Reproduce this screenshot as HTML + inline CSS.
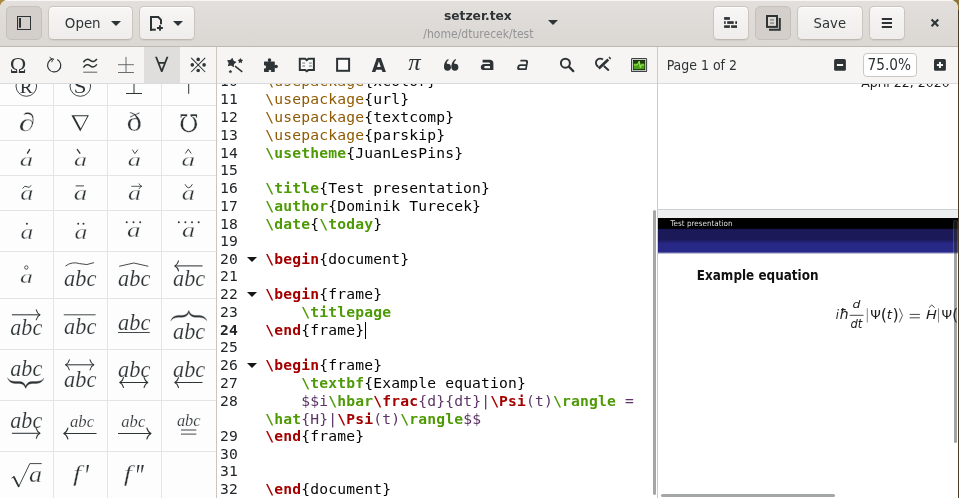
<!DOCTYPE html>
<html lang="en">
<head>
<meta charset="utf-8">
<title>setzer.tex</title>
<style>
*{box-sizing:border-box;margin:0;padding:0}
html,body{width:959px;height:498px;overflow:hidden;background:#4a3b2a}
body{position:relative;font-family:"DejaVu Sans","Liberation Sans",sans-serif;color:#2e3436}
#win{will-change:transform;position:absolute;left:0;top:0;width:958px;height:498px;background:#fff;border-radius:8px 8px 0 0;overflow:hidden}
#cornerL{position:absolute;left:0;top:0;width:10px;height:10px;background:#a88a3c}
#cornerR{position:absolute;left:949px;top:0;width:10px;height:10px;background:#8d7239}
#hdr{position:absolute;left:0;top:0;width:958px;height:47px;background:linear-gradient(#e2dfdc,#dbd7d3);border-bottom:1px solid #bfb8b1;box-shadow:inset 0 1px #f8f7f6}
.btn{position:absolute;top:6px;height:34px;border:1px solid #cbc5bf;border-bottom-color:#bfb8b1;border-radius:5px;background:linear-gradient(#f7f6f5,#efedec);box-shadow:inset 0 1px #fff,0 1px 1px rgba(0,0,0,.06)}
.btn.on{background:#d4cfca;border-color:#c6c0ba;box-shadow:none}
.tri{position:absolute;width:0;height:0;border-left:5px solid transparent;border-right:5px solid transparent;border-top:5px solid #2e3436}
#tb{position:absolute;left:0;top:47px;width:958px;height:37px;background:#f6f5f4;border-bottom:1px solid #d9dcde}
#tabsel{position:absolute;left:144px;top:47px;width:36px;height:36px;background:#dfdedd}
.vsep{position:absolute;top:47px;width:1px;height:451px}
#side{position:absolute;left:0;top:84px;width:216px;height:414px;background:#fdfdfd;overflow:hidden}
.gv{position:absolute;top:0;width:1px;height:414px;background:#e4e4e3}
.gh{position:absolute;left:0;width:216px;height:1px;background:#e4e4e3}
#ed{position:absolute;left:217px;top:84px;width:440px;height:414px;background:#fff;overflow:hidden}
.ln,.cl{position:absolute;font-family:"DejaVu Sans Mono","Liberation Mono",monospace;font-size:14.67px;line-height:18px;height:18px;letter-spacing:.168px;white-space:pre;color:#050505}
.ln{left:3px;color:#222527}
.ln.cur{font-weight:bold}
.cl{left:48.3px}
.k{color:#4e9a06;font-weight:bold}
.p{color:#8f5902}
.r{color:#a40000;font-weight:bold}
.m{color:#5c3566}
.fold{position:absolute;left:30px;width:0;height:0;border-left:5px solid transparent;border-right:5px solid transparent;border-top:5px solid #151515}
.caret{position:absolute;width:1px;height:17px;background:#000}
.sb{position:absolute;background:#a3a7a8;border-radius:2px}
#pv{position:absolute;left:658px;top:84px;width:300px;height:414px;background:#fff;overflow:hidden}
svg{position:absolute;overflow:visible}
</style>
</head>
<body>
<div id="cornerL"></div><div id="cornerR"></div>
<div id="win">
<div id="hdr">
  <div class="btn on" style="left:6px;width:36px"></div>
  <div class="btn" style="left:48px;width:85px"><div class="tri" style="left:62px;top:14px"></div></div>
  <div class="btn" style="left:139px;width:56px"><div class="tri" style="left:33px;top:14px"></div></div>
  <div class="tri" style="left:548px;top:20px"></div>
  <div class="btn" style="left:713px;width:36px"></div>
  <div class="btn on" style="left:755px;width:36px"></div>
  <div class="btn" style="left:797px;width:66px"></div>
  <div class="btn" style="left:869px;width:36px"></div>
</div>
<div id="tb"></div>
<div id="tabsel"></div>
<div id="side">
  <div class="gv" style="left:53px"></div><div class="gv" style="left:107px"></div><div class="gv" style="left:161px"></div>
  <div class="gh" style="top:21px"></div><div class="gh" style="top:56px"></div><div class="gh" style="top:91px"></div><div class="gh" style="top:126px"></div><div class="gh" style="top:167px"></div><div class="gh" style="top:214px"></div><div class="gh" style="top:265px"></div><div class="gh" style="top:316px"></div><div class="gh" style="top:367px"></div>
<svg style="left:0;top:-84px" width="216" height="498" viewBox="0 0 216 498" font-kerning="none">
<circle cx="26.3" cy="86.0" r="10.3" fill="none" stroke="#2e3436" stroke-width="0.9"/>
<text transform="translate(19.74 92.60) scale(1.037 1)" font-family="'Liberation Serif',serif" font-style="normal" font-weight="normal" font-size="18.63" fill="#2e3436">R</text>
<circle cx="80.3" cy="86.0" r="10.3" fill="none" stroke="#2e3436" stroke-width="0.9"/>
<text transform="translate(73.87 92.72) scale(1.213 1)" font-family="'Liberation Serif',serif" font-style="normal" font-weight="normal" font-size="18.90" fill="#2e3436">S</text>
<path d="M134.00 78.00L134.00 93.50" stroke="#2e3436" stroke-width="1.00" fill="none" stroke-linecap="butt"/>
<path d="M126.00 93.50L142.00 93.50" stroke="#2e3436" stroke-width="1.00" fill="none" stroke-linecap="butt"/>
<path d="M188.70 78.00L188.70 93.80" stroke="#2e3436" stroke-width="1.00" fill="none" stroke-linecap="butt"/>
<text transform="translate(18.70 131.16) scale(1.279 1)" font-family="'Liberation Serif',serif" font-style="italic" font-weight="normal" font-size="25.87" fill="#2e3436" stroke="#fdfdfd" stroke-width="0.3">∂</text>
<path d="M71.4 115.2H88.9L80.2 131.4ZM74.16 116.3L80.76 128.46L87.29 116.3Z" stroke="none" stroke-width="0.00" fill="#2e3436" stroke-linecap="round" stroke-linejoin="round"/>
<text transform="translate(126.51 131.15) scale(1.055 1)" font-family="'DejaVu Serif',serif" font-style="normal" font-weight="normal" font-size="24.55" fill="#2e3436" stroke="#fdfdfd" stroke-width="0.3">ð</text>
<text transform="translate(178.96 131.88) scale(0.973 1)" font-family="'DejaVu Serif',serif" font-style="normal" font-weight="normal" font-size="24.25" fill="#2e3436" stroke="#fdfdfd" stroke-width="0.3">℧</text>
<text transform="translate(19.65 165.75) scale(1.372 1)" font-family="'Liberation Serif',serif" font-style="italic" font-weight="normal" font-size="19.54" fill="#2e3436" stroke="#fdfdfd" stroke-width="0.3">a</text>
<path d="M27.20 153.60L29.90 149.20" stroke="#2e3436" stroke-width="1.30" fill="none" stroke-linecap="butt"/>
<text transform="translate(74.07 165.75) scale(1.336 1)" font-family="'Liberation Serif',serif" font-style="italic" font-weight="normal" font-size="19.54" fill="#2e3436" stroke="#fdfdfd" stroke-width="0.3">a</text>
<path d="M77.00 149.20L80.20 153.60" stroke="#2e3436" stroke-width="1.30" fill="none" stroke-linecap="butt"/>
<text transform="translate(127.86 165.75) scale(1.360 1)" font-family="'Liberation Serif',serif" font-style="italic" font-weight="normal" font-size="19.54" fill="#2e3436" stroke="#fdfdfd" stroke-width="0.3">a</text>
<path d="M132.6 150L134.9 153.6L137.6 150" stroke="#2e3436" stroke-width="0.90" fill="none" stroke-linecap="round" stroke-linejoin="round"/>
<text transform="translate(181.54 165.75) scale(1.396 1)" font-family="'Liberation Serif',serif" font-style="italic" font-weight="normal" font-size="19.54" fill="#2e3436" stroke="#fdfdfd" stroke-width="0.3">a</text>
<path d="M185.6 153.2L188.3 149.2L191 153.2" stroke="#2e3436" stroke-width="0.90" fill="none" stroke-linecap="round" stroke-linejoin="round"/>
<text transform="translate(20.27 200.34) scale(1.267 1)" font-family="'Liberation Serif',serif" font-style="italic" font-weight="normal" font-size="20.79" fill="#2e3436" stroke="#fdfdfd" stroke-width="0.3">a</text>
<path d="M22.8 188.2Q24.6 184.8 27 186.8T31 185.6" stroke="#2e3436" stroke-width="0.90" fill="none" stroke-linecap="round" stroke-linejoin="round"/>
<text transform="translate(73.64 200.34) scale(1.301 1)" font-family="'Liberation Serif',serif" font-style="italic" font-weight="normal" font-size="20.79" fill="#2e3436" stroke="#fdfdfd" stroke-width="0.3">a</text>
<path d="M75.60 185.90L84.00 185.90" stroke="#2e3436" stroke-width="0.90" fill="none" stroke-linecap="butt"/>
<text transform="translate(128.07 200.34) scale(1.256 1)" font-family="'Liberation Serif',serif" font-style="italic" font-weight="normal" font-size="20.79" fill="#2e3436" stroke="#fdfdfd" stroke-width="0.3">a</text>
<path d="M131.30 186.30L141.60 186.30" stroke="#2e3436" stroke-width="0.80" fill="none" stroke-linecap="butt"/>
<path d="M139 183.8Q139.8 185.6 141.8 186.3Q139.8 187 139 188.8" stroke="#2e3436" stroke-width="0.80" fill="none" stroke-linecap="round" stroke-linejoin="round"/>
<text transform="translate(181.77 200.34) scale(1.267 1)" font-family="'Liberation Serif',serif" font-style="italic" font-weight="normal" font-size="20.79" fill="#2e3436" stroke="#fdfdfd" stroke-width="0.3">a</text>
<path d="M185.2 184.6Q188.6 191.4 192.2 184.6" stroke="#2e3436" stroke-width="0.90" fill="none" stroke-linecap="round" stroke-linejoin="round"/>
<text transform="translate(20.59 239.15) scale(1.285 1)" font-family="'Liberation Serif',serif" font-style="italic" font-weight="normal" font-size="19.96" fill="#2e3436" stroke="#fdfdfd" stroke-width="0.3">a</text>
<circle cx="26.90" cy="223.80" r="1.00" fill="#2e3436"/>
<text transform="translate(74.48 239.15) scale(1.297 1)" font-family="'Liberation Serif',serif" font-style="italic" font-weight="normal" font-size="19.96" fill="#2e3436" stroke="#fdfdfd" stroke-width="0.3">a</text>
<circle cx="78.20" cy="223.80" r="1.00" fill="#2e3436"/>
<circle cx="83.50" cy="223.80" r="1.00" fill="#2e3436"/>
<text transform="translate(127.04 237.33) scale(1.288 1)" font-family="'Liberation Serif',serif" font-style="italic" font-weight="normal" font-size="21.00" fill="#2e3436" stroke="#fdfdfd" stroke-width="0.3">a</text>
<circle cx="126.70" cy="222.30" r="1.00" fill="#2e3436"/>
<circle cx="133.50" cy="222.30" r="1.00" fill="#2e3436"/>
<circle cx="140.20" cy="222.30" r="1.00" fill="#2e3436"/>
<text transform="translate(182.07 237.33) scale(1.244 1)" font-family="'Liberation Serif',serif" font-style="italic" font-weight="normal" font-size="21.00" fill="#2e3436" stroke="#fdfdfd" stroke-width="0.3">a</text>
<circle cx="178.80" cy="222.30" r="1.00" fill="#2e3436"/>
<circle cx="185.40" cy="222.30" r="1.00" fill="#2e3436"/>
<circle cx="192.00" cy="222.30" r="1.00" fill="#2e3436"/>
<circle cx="198.70" cy="222.30" r="1.00" fill="#2e3436"/>
<text transform="translate(20.08 282.95) scale(1.311 1)" font-family="'Liberation Serif',serif" font-style="italic" font-weight="normal" font-size="19.75" fill="#2e3436" stroke="#fdfdfd" stroke-width="0.3">a</text>
<circle cx="26.3" cy="267.5" r="1.7" fill="none" stroke="#2e3436" stroke-width="0.8"/>
<text transform="translate(64.03 286.26) scale(0.949 1)" font-family="'Liberation Serif',serif" font-style="italic" font-weight="normal" font-size="23.58" fill="#2e3436" stroke="#fdfdfd" stroke-width="0.15">abc</text>
<path d="M65.8 265.8Q72 261.2 79.5 263.6T93.6 262.8" stroke="#2e3436" stroke-width="0.90" fill="none" stroke-linecap="round" stroke-linejoin="round"/>
<text transform="translate(118.03 286.26) scale(0.949 1)" font-family="'Liberation Serif',serif" font-style="italic" font-weight="normal" font-size="23.58" fill="#2e3436" stroke="#fdfdfd" stroke-width="0.15">abc</text>
<path d="M119.6 266.2L133.8 263L147.9 266.2" stroke="#2e3436" stroke-width="0.90" fill="none" stroke-linecap="round" stroke-linejoin="round"/>
<text transform="translate(173.04 286.26) scale(0.966 1)" font-family="'Liberation Serif',serif" font-style="italic" font-weight="normal" font-size="23.01" fill="#2e3436" stroke="#fdfdfd" stroke-width="0.15">abc</text>
<path d="M174.80 265.90L202.50 265.90" stroke="#2e3436" stroke-width="1.05" fill="none" stroke-linecap="butt"/>
<path d="M178.55 260.90Q177.55 264.65 174.80 265.90Q177.55 267.15 178.55 270.90" stroke="#2e3436" stroke-width="1.05" fill="none" stroke-linecap="round" stroke-linejoin="round"/>
<text transform="translate(10.24 335.36) scale(0.934 1)" font-family="'Liberation Serif',serif" font-style="italic" font-weight="normal" font-size="23.72" fill="#2e3436" stroke="#fdfdfd" stroke-width="0.15">abc</text>
<path d="M11.90 314.80L40.00 314.80" stroke="#2e3436" stroke-width="1.05" fill="none" stroke-linecap="butt"/>
<path d="M36.25 309.80Q37.25 313.55 40.00 314.80Q37.25 316.05 36.25 319.80" stroke="#2e3436" stroke-width="1.05" fill="none" stroke-linecap="round" stroke-linejoin="round"/>
<text transform="translate(64.03 333.57) scale(0.991 1)" font-family="'Liberation Serif',serif" font-style="italic" font-weight="normal" font-size="22.58" fill="#2e3436" stroke="#fdfdfd" stroke-width="0.15">abc</text>
<path d="M63.80 314.80L95.60 314.80" stroke="#2e3436" stroke-width="0.90" fill="none" stroke-linecap="butt"/>
<text transform="translate(118.03 329.86) scale(0.973 1)" font-family="'Liberation Serif',serif" font-style="italic" font-weight="normal" font-size="23.01" fill="#2e3436" stroke="#fdfdfd" stroke-width="0.15">abc</text>
<path d="M118.00 332.50L149.80 332.50" stroke="#2e3436" stroke-width="0.90" fill="none" stroke-linecap="butt"/>
<text transform="translate(173.04 339.06) scale(0.955 1)" font-family="'Liberation Serif',serif" font-style="italic" font-weight="normal" font-size="23.29" fill="#2e3436" stroke="#fdfdfd" stroke-width="0.15">abc</text>
<path d="M170.8 320.6Q172.5 315.6 178 315.4H182.5Q187 315.2 188.8 310.4Q190.6 315.2 195 315.4H199.5Q205 315.6 206.8 320.6Q204.5 317.4 199.5 317.2H195Q190.2 317 188.8 312.6Q187.4 317 182.5 317.2H178Q173 317.4 170.8 320.6Z" stroke="#2e3436" stroke-width="0.30" fill="#2e3436" stroke-linecap="round" stroke-linejoin="round"/>
<text transform="translate(10.24 376.06) scale(0.940 1)" font-family="'Liberation Serif',serif" font-style="italic" font-weight="normal" font-size="23.58" fill="#2e3436" stroke="#fdfdfd" stroke-width="0.15">abc</text>
<path d="M7.6 378.2Q9.3 383.2 15 383.4H19.5Q24 383.6 25.7 388.4Q27.4 383.6 32 383.4H36.5Q42.2 383.2 43.9 378.2Q41.6 381.4 36.5 381.6H32Q27.2 381.8 25.7 386.2Q24.2 381.8 19.5 381.6H15Q10 381.4 7.6 378.2Z" stroke="#2e3436" stroke-width="0.30" fill="#2e3436" stroke-linecap="round" stroke-linejoin="round"/>
<text transform="translate(64.03 387.06) scale(0.961 1)" font-family="'Liberation Serif',serif" font-style="italic" font-weight="normal" font-size="23.29" fill="#2e3436" stroke="#fdfdfd" stroke-width="0.15">abc</text>
<path d="M65.60 364.80L93.80 364.80" stroke="#2e3436" stroke-width="1.05" fill="none" stroke-linecap="butt"/>
<path d="M69.35 359.80Q68.35 363.55 65.60 364.80Q68.35 366.05 69.35 369.80" stroke="#2e3436" stroke-width="1.05" fill="none" stroke-linecap="round" stroke-linejoin="round"/>
<path d="M90.05 359.80Q91.05 363.55 93.80 364.80Q91.05 366.05 90.05 369.80" stroke="#2e3436" stroke-width="1.05" fill="none" stroke-linecap="round" stroke-linejoin="round"/>
<text transform="translate(118.03 377.06) scale(0.961 1)" font-family="'Liberation Serif',serif" font-style="italic" font-weight="normal" font-size="23.29" fill="#2e3436" stroke="#fdfdfd" stroke-width="0.15">abc</text>
<path d="M119.80 382.50L147.80 382.50" stroke="#2e3436" stroke-width="1.05" fill="none" stroke-linecap="butt"/>
<path d="M123.55 377.50Q122.55 381.25 119.80 382.50Q122.55 383.75 123.55 387.50" stroke="#2e3436" stroke-width="1.05" fill="none" stroke-linecap="round" stroke-linejoin="round"/>
<path d="M144.05 377.50Q145.05 381.25 147.80 382.50Q145.05 383.75 144.05 387.50" stroke="#2e3436" stroke-width="1.05" fill="none" stroke-linecap="round" stroke-linejoin="round"/>
<text transform="translate(173.04 377.06) scale(0.955 1)" font-family="'Liberation Serif',serif" font-style="italic" font-weight="normal" font-size="23.29" fill="#2e3436" stroke="#fdfdfd" stroke-width="0.15">abc</text>
<path d="M174.80 382.50L202.50 382.50" stroke="#2e3436" stroke-width="1.05" fill="none" stroke-linecap="butt"/>
<path d="M178.55 377.50Q177.55 381.25 174.80 382.50Q177.55 383.75 178.55 387.50" stroke="#2e3436" stroke-width="1.05" fill="none" stroke-linecap="round" stroke-linejoin="round"/>
<text transform="translate(10.24 428.36) scale(0.951 1)" font-family="'Liberation Serif',serif" font-style="italic" font-weight="normal" font-size="23.29" fill="#2e3436" stroke="#fdfdfd" stroke-width="0.15">abc</text>
<path d="M11.90 433.30L40.00 433.30" stroke="#2e3436" stroke-width="1.05" fill="none" stroke-linecap="butt"/>
<path d="M36.25 428.30Q37.25 432.05 40.00 433.30Q37.25 434.55 36.25 438.30" stroke="#2e3436" stroke-width="1.05" fill="none" stroke-linecap="round" stroke-linejoin="round"/>
<text transform="translate(70.00 426.53) scale(1.030 1)" font-family="'Liberation Serif',serif" font-style="italic" font-weight="normal" font-size="16.19" fill="#2e3436" stroke="#fdfdfd" stroke-width="0.15">abc</text>
<path d="M63.80 433.50L96.50 433.50" stroke="#2e3436" stroke-width="1.05" fill="none" stroke-linecap="butt"/>
<path d="M67.92 428.00Q66.83 432.12 63.80 433.50Q66.83 434.88 67.92 439.00" stroke="#2e3436" stroke-width="1.05" fill="none" stroke-linecap="round" stroke-linejoin="round"/>
<text transform="translate(121.31 426.53) scale(1.025 1)" font-family="'Liberation Serif',serif" font-style="italic" font-weight="normal" font-size="16.19" fill="#2e3436" stroke="#fdfdfd" stroke-width="0.15">abc</text>
<path d="M118.00 433.50L151.00 433.50" stroke="#2e3436" stroke-width="1.05" fill="none" stroke-linecap="butt"/>
<path d="M146.88 428.00Q147.97 432.12 151.00 433.50Q147.97 434.88 146.88 439.00" stroke="#2e3436" stroke-width="1.05" fill="none" stroke-linecap="round" stroke-linejoin="round"/>
<text transform="translate(176.91 426.34) scale(1.030 1)" font-family="'Liberation Serif',serif" font-style="italic" font-weight="normal" font-size="15.91" fill="#2e3436" stroke="#fdfdfd" stroke-width="0.15">abc</text>
<path d="M181.00 430.00L196.30 430.00" stroke="#2e3436" stroke-width="0.90" fill="none" stroke-linecap="butt"/>
<path d="M181.00 434.10L196.30 434.10" stroke="#2e3436" stroke-width="0.90" fill="none" stroke-linecap="butt"/>
<text transform="translate(29.07 481.81) scale(1.122 1)" font-family="'Liberation Serif',serif" font-style="italic" font-weight="normal" font-size="23.29" fill="#2e3436" stroke="#fdfdfd" stroke-width="0.3">a</text>
<path d="M11.8 478L14 476.8L18.8 486.5L29.8 463.6H41.3" stroke="#2e3436" stroke-width="0.90" fill="none" stroke-linecap="round" stroke-linejoin="round"/>
<path d="M13.9 477L18.6 486.3" stroke="#2e3436" stroke-width="1.70" fill="none" stroke-linecap="round" stroke-linejoin="round"/>
<text transform="translate(73.07 480.77) scale(1.293 1)" font-family="'Liberation Serif',serif" font-style="italic" font-weight="normal" font-size="22.68" fill="#2e3436" stroke="#fdfdfd" stroke-width="0.3">f</text>
<text transform="translate(85.19 485.71) scale(0.704 1)" font-family="'Liberation Serif',serif" font-style="normal" font-weight="normal" font-size="31.93" fill="#2e3436">′</text>
<text transform="translate(123.77 480.77) scale(1.282 1)" font-family="'Liberation Serif',serif" font-style="italic" font-weight="normal" font-size="22.68" fill="#2e3436" stroke="#fdfdfd" stroke-width="0.3">f</text>
<text transform="translate(135.69 485.71) scale(0.701 1)" font-family="'Liberation Serif',serif" font-style="normal" font-weight="normal" font-size="31.93" fill="#2e3436">″</text>
</svg>

</div>
<div class="vsep" style="left:216px;background:#cdc6bf"></div>
<div id="ed">
<div class="ln" style="top:-12.00px">10</div>
<div class="cl" style="top:-12.00px"><span class="p">\usepackage</span>{xcolor}</div>
<div class="ln" style="top:6.00px">11</div>
<div class="cl" style="top:6.00px"><span class="p">\usepackage</span>{url}</div>
<div class="ln" style="top:24.00px">12</div>
<div class="cl" style="top:24.00px"><span class="p">\usepackage</span>{textcomp}</div>
<div class="ln" style="top:42.00px">13</div>
<div class="cl" style="top:42.00px"><span class="p">\usepackage</span>{parskip}</div>
<div class="ln" style="top:60.00px">14</div>
<div class="cl" style="top:60.00px"><span class="k">\usetheme</span>{JuanLesPins}</div>
<div class="ln" style="top:77.00px">15</div>
<div class="ln" style="top:95.00px">16</div>
<div class="cl" style="top:95.00px"><span class="k">\title</span>{Test&nbsp;presentation}</div>
<div class="ln" style="top:113.00px">17</div>
<div class="cl" style="top:113.00px"><span class="k">\author</span>{Dominik&nbsp;Turecek}</div>
<div class="ln" style="top:131.00px">18</div>
<div class="cl" style="top:131.00px"><span class="k">\date</span>{<span class="k">\today</span>}</div>
<div class="ln" style="top:148.00px">19</div>
<div class="ln" style="top:166.00px">20</div>
<div class="fold" style="top:173.20px"></div>
<div class="cl" style="top:166.00px"><span class="r">\begin</span>{document}</div>
<div class="ln" style="top:183.00px">21</div>
<div class="ln" style="top:201.00px">22</div>
<div class="fold" style="top:208.20px"></div>
<div class="cl" style="top:201.00px"><span class="r">\begin</span>{frame}</div>
<div class="ln" style="top:219.00px">23</div>
<div class="cl" style="top:219.00px">&nbsp;&nbsp;&nbsp;&nbsp;<span class="k">\titlepage</span></div>
<div class="ln cur" style="top:237.00px">24</div>
<div class="cl" style="top:237.00px"><span class="r">\end</span>{frame}</div>
<div class="caret" style="top:237.50px;left:147.60px"></div>
<div class="ln" style="top:254.00px">25</div>
<div class="ln" style="top:272.00px">26</div>
<div class="fold" style="top:279.20px"></div>
<div class="cl" style="top:272.00px"><span class="r">\begin</span>{frame}</div>
<div class="ln" style="top:290.00px">27</div>
<div class="cl" style="top:290.00px">&nbsp;&nbsp;&nbsp;&nbsp;<span class="k">\textbf</span>{Example&nbsp;equation}</div>
<div class="ln" style="top:308.00px">28</div>
<div class="cl" style="top:308.00px">&nbsp;&nbsp;&nbsp;&nbsp;<span class="m">$$i</span><span class="k">\hbar</span><span class="r">\frac</span><span class="m">{d}{dt}|</span><span class="r">\Psi</span><span class="m">(t)</span><span class="k">\rangle</span><span class="m">&nbsp;=</span></div>
<div class="cl" style="top:326.00px"><span class="k">\hat</span><span class="m">{H}|</span><span class="r">\Psi</span><span class="m">(t)</span><span class="k">\rangle</span><span class="m">$$</span></div>
<div class="ln" style="top:343.00px">29</div>
<div class="cl" style="top:343.00px"><span class="r">\end</span>{frame}</div>
<div class="ln" style="top:361.00px">30</div>
<div class="ln" style="top:378.00px">31</div>
<div class="ln" style="top:396.00px">32</div>
<div class="cl" style="top:396.00px"><span class="r">\end</span>{document}</div>
  <div class="sb" style="left:436px;top:126px;width:3px;height:285px"></div>
</div>
<div class="vsep" style="left:657px;background:#d1cac4"></div>
<div id="pv">
  <div style="position:absolute;left:0;top:125px;width:300px;height:1px;background:#cdd0d1"></div>
  <div style="position:absolute;left:0;top:126px;width:300px;height:8px;background:#eeeff0"></div>
  <div style="position:absolute;left:0;top:133.8px;width:300px;height:290px;background:#fff"></div>
  <div style="position:absolute;left:0;top:133.8px;width:300px;height:36.4px;background:linear-gradient(#000 0,#000 10.3px,#1b1958 11.7px,#1b1958 21.6px,#272785 25.5px,#282888 33.9px,#fff 36.2px)"></div>
  <svg style="left:-658px;top:-84px" width="958" height="498" viewBox="0 0 958 498" font-kerning="none">
<text transform="translate(861.20 86.80) scale(1.045 1)" font-family="'DejaVu Sans',sans-serif" font-style="normal" font-weight="normal" font-size="12.00" fill="#1c1c1c">April 22, 2020</text>
<text transform="translate(670.42 225.79) scale(0.932 1)" font-family="'DejaVu Sans',sans-serif" font-style="normal" font-weight="normal" font-size="7.75" fill="#dedede">Test presentation</text>
<text transform="translate(696.80 280.33) scale(0.902 1)" font-family="'DejaVu Sans',sans-serif" font-style="normal" font-weight="bold" font-size="13.33" fill="#111">Example equation</text>
<text transform="translate(835.70 319.10) scale(0.980 1)" font-family="'DejaVu Sans',sans-serif" font-style="italic" font-weight="normal" font-size="11.58" fill="#1c1c1c">i</text>
<text transform="translate(839.55 319.10) scale(0.995 1)" font-family="'DejaVu Sans',sans-serif" font-style="italic" font-weight="normal" font-size="14.21" fill="#1c1c1c">ħ</text>
<text transform="translate(852.53 308.14) scale(1.097 1)" font-family="'DejaVu Sans',sans-serif" font-style="italic" font-weight="normal" font-size="11.37" fill="#1c1c1c">d</text>
<path d="M849.70 315.30L863.50 315.30" stroke="#1c1c1c" stroke-width="0.80" fill="none"/>
<text transform="translate(850.47 328.43) scale(0.965 1)" font-family="'DejaVu Sans',sans-serif" font-style="italic" font-weight="normal" font-size="11.89" fill="#1c1c1c">dt</text>
<path d="M867.30 308.30L867.30 322.50" stroke="#555" stroke-width="0.70" fill="none"/>
<text transform="translate(870.34 319.10) scale(1.116 1)" font-family="'DejaVu Sans',sans-serif" font-style="normal" font-weight="normal" font-size="12.07" fill="#1c1c1c">Ψ</text>
<text transform="translate(880.82 320.38) scale(1.000 1)" font-family="'DejaVu Sans',sans-serif" font-style="normal" font-weight="normal" font-size="16.06" fill="#1c1c1c">(</text>
<text transform="translate(886.74 319.10) scale(1.159 1)" font-family="'DejaVu Sans',sans-serif" font-style="italic" font-weight="normal" font-size="11.54" fill="#1c1c1c">t</text>
<text transform="translate(892.51 320.38) scale(1.000 1)" font-family="'DejaVu Sans',sans-serif" font-style="normal" font-weight="normal" font-size="16.06" fill="#1c1c1c">)</text>
<path d="M899.3 308.3L902.5 315.4L899.3 322.5" stroke="#333" stroke-width="0.8" fill="none"/>
<path d="M909.70 314.40L919.90 314.40" stroke="#1c1c1c" stroke-width="0.80" fill="none"/>
<path d="M909.70 317.80L919.90 317.80" stroke="#1c1c1c" stroke-width="0.80" fill="none"/>
<text transform="translate(925.91 319.10) scale(1.198 1)" font-family="'DejaVu Sans',sans-serif" font-style="italic" font-weight="normal" font-size="12.07" fill="#1c1c1c">H</text>
<path d="M929 307.6L931.8 305L934.6 307.6" stroke="#1c1c1c" stroke-width="0.8" fill="none"/>
<path d="M938.50 308.30L938.50 322.50" stroke="#555" stroke-width="0.70" fill="none"/>
<text transform="translate(941.54 319.10) scale(1.116 1)" font-family="'DejaVu Sans',sans-serif" font-style="normal" font-weight="normal" font-size="12.07" fill="#1c1c1c">Ψ</text>
<text transform="translate(952.12 320.38) scale(1.000 1)" font-family="'DejaVu Sans',sans-serif" font-style="normal" font-weight="normal" font-size="16.06" fill="#1c1c1c">(</text>
</svg>

  <div class="sb" style="left:296px;top:137px;width:3px;height:222px;background:rgba(46,52,54,.45);box-shadow:0 0 0 1px rgba(255,255,255,.18)"></div>
  <div class="sb" style="left:3px;top:410px;width:174px;height:3px"></div>
</div>
<div style="position:absolute;left:863px;top:53px;width:54px;height:24px;border:1px solid #cdc7c2;border-radius:4px;background:#fff"></div>
<svg style="left:0;top:0" width="958" height="498" viewBox="0 0 958 498" font-kerning="none">
<rect x="17.5" y="16.5" width="13" height="13" fill="none" stroke="#2e3436" stroke-width="1"/>
<rect x="18.90" y="18.00" width="2.10" height="9.70" fill="#2e3436" rx="0"/>
<path d="M151 30.7V17.1H158.3L161 19.9V24.3" fill="none" stroke="#2e3436" stroke-width="2" stroke-linejoin="miter"/>
<path d="M150 29.7H155.8" fill="none" stroke="#2e3436" stroke-width="2" />
<rect x="159.00" y="25.20" width="2.00" height="5.50" fill="#2e3436" rx="0"/>
<rect x="157.00" y="27.00" width="5.90" height="2.00" fill="#2e3436" rx="0"/>
<rect x="724.10" y="17.10" width="5.80" height="2.70" fill="#2e3436" rx="0"/>
<rect x="724.10" y="21.20" width="1.60" height="2.70" fill="#2e3436" rx="0"/>
<rect x="727.20" y="21.20" width="6.50" height="2.70" fill="#2e3436" rx="0"/>
<rect x="735.30" y="21.20" width="1.70" height="2.70" fill="#2e3436" rx="0"/>
<rect x="724.10" y="25.30" width="5.80" height="2.60" fill="#2e3436" rx="0"/>
<rect x="731.10" y="25.30" width="5.90" height="2.60" fill="#2e3436" rx="0"/>
<rect x="767.00" y="16.00" width="10.00" height="11.00" fill="#dad6d2" rx="0"/>
<rect x="767" y="16" width="10" height="10.9" fill="none" stroke="#2e3436" stroke-width="2"/>
<path d="M779.8 18V29.7H769" fill="none" stroke="#2e3436" stroke-width="2" />
<rect x="770.00" y="19.00" width="4.00" height="1.80" fill="#9a9c9c" rx="0"/>
<rect x="770.00" y="22.10" width="4.00" height="1.90" fill="#9a9c9c" rx="0"/>
<rect x="881.80" y="18.00" width="10.20" height="2.00" fill="#2e3436" rx="0"/>
<rect x="881.80" y="22.00" width="10.20" height="2.00" fill="#2e3436" rx="0"/>
<rect x="881.80" y="26.00" width="10.20" height="2.00" fill="#2e3436" rx="0"/>
<path d="M931.6 19.6L938.2 26.2M938.2 19.6L931.6 26.2" fill="none" stroke="#2e3436" stroke-width="2.1" />
<text transform="translate(64.84 28.39) scale(0.997 1)" font-family="'DejaVu Sans Condensed','DejaVu Sans',sans-serif" font-style="normal" font-weight="normal" font-size="14.94" fill="#2e3436" font-stretch="condensed">Open</text>
<text transform="translate(813.62 27.70) scale(1.020 1)" font-family="'DejaVu Sans Condensed','DejaVu Sans',sans-serif" font-style="normal" font-weight="normal" font-size="14.41" fill="#2e3436" font-stretch="condensed">Save</text>
<text transform="translate(443.97 19.62) scale(1.098 1)" font-family="'DejaVu Sans Condensed','DejaVu Sans',sans-serif" font-style="normal" font-weight="bold" font-size="12.42" fill="#2e3436" font-stretch="condensed">setzer.tex</text>
<text transform="translate(423.30 37.50) scale(1.017 1)" font-family="'DejaVu Sans Condensed','DejaVu Sans',sans-serif" font-style="normal" font-weight="normal" font-size="11.85" fill="#929595" font-stretch="condensed">/home/dturecek/test</text>
<text transform="translate(9.74 72.60) scale(0.961 1)" font-family="'Liberation Serif',serif" font-style="normal" font-weight="normal" font-size="23.26" fill="#2e3436">Ω</text>
<path d="M57.3 59.5A6.6 6.6 0 1 1 52.5 58.95" fill="none" stroke="#2e3436" stroke-width="1.2"/>
<path d="M49.6 57.3Q51.6 58.9 53.8 59.2Q52.1 60.3 51.6 62.2" fill="none" stroke="#2e3436" stroke-width="1.0" />
<path d="M83.4 62.2Q86.6 57.6 90.2 60.4T96.9 59" fill="none" stroke="#2e3436" stroke-width="1.55" />
<path d="M83.4 67.6Q86.6 63 90.2 65.8T96.9 64.4" fill="none" stroke="#2e3436" stroke-width="1.55" />
<path d="M83.2 72.2H97.2" fill="none" stroke="#4a4f51" stroke-width="0.9" />
<path d="M126 56.9V72.6M118 64.7H133.9M118 72.5H133.9" fill="none" stroke="#5a5f61" stroke-width="0.9" />
<text transform="translate(154.90 72.40) scale(1.066 1)" font-family="'DejaVu Serif',serif" font-style="normal" font-weight="normal" font-size="20.99" fill="#2e3436">∀</text>
<path d="M191.2 57.9L205.2 72M205.2 57.9L191.2 72" fill="none" stroke="#2e3436" stroke-width="1.05" />
<circle cx="198.2" cy="59.4" r="1.8" fill="#2e3436"/>
<circle cx="192.3" cy="64.9" r="1.8" fill="#2e3436"/>
<circle cx="204.1" cy="64.9" r="1.8" fill="#2e3436"/>
<circle cx="198.2" cy="70.5" r="1.8" fill="#2e3436"/>
<path d="M232.39 57.68L233.59 60.69L236.55 61.99L234.06 64.06L233.74 67.28L231.00 65.56L227.83 66.24L228.63 63.10L227.00 60.31L230.23 60.09Z" fill="#2e3436" stroke="none" stroke-width="0" />
<path d="M240.40 57.90L241.28 59.59L243.16 59.90L241.83 61.26L242.10 63.15L240.40 62.30L238.70 63.15L238.97 61.26L237.64 59.90L239.52 59.59Z" fill="#2e3436" stroke="none" stroke-width="0" />
<path d="M230.40 69.70L230.99 70.79L232.21 71.01L231.35 71.91L231.52 73.14L230.40 72.60L229.28 73.14L229.45 71.91L228.59 71.01L229.81 70.79Z" fill="#2e3436" stroke="none" stroke-width="0" />
<path d="M235 66.2L242.3 71.9" fill="none" stroke="#2e3436" stroke-width="1.5" />
<rect x="264.00" y="61.40" width="10.80" height="10.50" fill="#2e3436" rx="0.6"/>
<circle cx="269.5" cy="60" r="1.75" fill="#2e3436"/>
<rect x="268.60" y="60.00" width="1.80" height="2.00" fill="#2e3436" rx="0"/>
<circle cx="276.1" cy="66.4" r="1.75" fill="#2e3436"/>
<rect x="274.00" y="65.50" width="2.10" height="1.80" fill="#2e3436" rx="0"/>
<circle cx="264.4" cy="66.9" r="1.7" fill="#f6f5f4"/>
<rect x="268.60" y="70.00" width="2.70" height="2.00" fill="#f6f5f4" rx="1.2"/>
<path d="M299.8 58.8H305.2L306.8 60.2L308.4 58.8H313.9V69.9H308.4L306.8 71.2L305.2 69.9H299.8Z" fill="#fafafa" stroke="#2e3436" stroke-width="2" stroke-linejoin="miter"/>
<rect x="302.20" y="62.30" width="2.90" height="1.60" fill="#a9abab" rx="0"/>
<rect x="302.20" y="65.20" width="2.90" height="1.70" fill="#a9abab" rx="0"/>
<rect x="308.90" y="62.30" width="3.00" height="1.60" fill="#a9abab" rx="0"/>
<rect x="308.90" y="65.20" width="3.00" height="1.70" fill="#a9abab" rx="0"/>
<rect x="337.1" y="58.8" width="12" height="12" fill="#fafafa" stroke="#2e3436" stroke-width="2"/>
<text transform="translate(371.81 71.80) scale(0.975 1)" font-family="'DejaVu Sans',sans-serif" font-style="normal" font-weight="bold" font-size="18.93" fill="#2e3436">A</text>
<text transform="translate(408.17 70.17) scale(1.041 1)" font-family="'Liberation Serif',serif" font-style="italic" font-weight="normal" font-size="23.89" fill="#2e3436">π</text>
<circle cx="447.50" cy="67.3" r="3.45" fill="#2e3436"/>
<path d="M444.05 67.3C443.90 62.5 446.30 60 448.20 59.1L448.70 60.1C447.00 61.2 446.40 62.8 447.10 64.8Z" fill="#2e3436" stroke="none" stroke-width="0" />
<circle cx="454.90" cy="67.3" r="3.45" fill="#2e3436"/>
<path d="M451.45 67.3C451.30 62.5 453.70 60 455.60 59.1L456.10 60.1C454.40 61.2 453.80 62.8 454.50 64.8Z" fill="#2e3436" stroke="none" stroke-width="0" />
<path d="M482.6 59.8H489.6Q493.4 59.8 493.4 63.4V70.1H484.2Q480.8 70.1 480.8 67.2T484.2 64H490V63.6Q490 62.4 488.8 62.4H482.6ZM490 66H485.4Q484.2 66 484.2 67.15T485.4 68.3H490Z" fill="#2e3436" stroke="none" stroke-width="0" fill-rule="evenodd"/>
<path d="M520.6 59.8H525.6Q528.6 59.8 528 62.6L526.6 70.1H519.4Q516.6 70.1 517.2 67.2T520.4 64.2H526L526.2 63Q526.4 61.6 525 61.6H520.2ZM525.6 65.9H520.8Q519.4 65.9 519.2 67.1T520.2 68.3H525.2Z" fill="#2e3436" stroke="none" stroke-width="0" fill-rule="evenodd"/>
<circle cx="565.4" cy="63.2" r="4.5" fill="none" stroke="#2e3436" stroke-width="2"/>
<path d="M568.8 66.6L573.3 71.1" fill="none" stroke="#2e3436" stroke-width="2.2" stroke-linecap="round"/>
<path d="M602.96 59.6A4.3 4.3 0 1 0 598.38 66.8" fill="none" stroke="#2e3436" stroke-width="1.9"/>
<path d="M604.4 66.4L608.3 69.9" fill="none" stroke="#2e3436" stroke-width="2.0" stroke-linecap="round"/>
<path d="M608.3 59.5L598.7 68.6" fill="none" stroke="#2e3436" stroke-width="2.7" />
<path d="M609.3 58.5L610.4 57.5" fill="none" stroke="#2e3436" stroke-width="2.5" />
<rect x="631.00" y="58.00" width="16.10" height="14.10" fill="#3c4143" rx="1.2"/>
<rect x="632.00" y="59.00" width="14.10" height="12.10" fill="#e4e5e4" rx="0.5"/>
<rect x="632.90" y="59.90" width="12.30" height="10.30" fill="#0b0e0b" rx="0"/>
<rect x="633.60" y="60.70" width="10.90" height="8.70" fill="#3f8f14" rx="0"/>
<rect x="633.60" y="60.70" width="10.90" height="2.70" fill="#1f4010" rx="0"/>
<rect x="633.60" y="65.60" width="10.90" height="0.80" fill="#5cba22" rx="0"/>
<rect x="633.60" y="67.60" width="10.90" height="0.80" fill="#5cba22" rx="0"/>
<path d="M633.8 64.9H637.4L639.2 61.2L640.3 67.6L641.3 64.9H644.3" fill="none" stroke="#a6f060" stroke-width="1.0" />
<rect x="834.10" y="59.10" width="11.80" height="11.70" fill="#2e3436" rx="1.6"/>
<rect x="836.90" y="64.00" width="6.20" height="2.00" fill="#f6f5f4" rx="0"/>
<rect x="934.00" y="59.10" width="11.90" height="11.70" fill="#2e3436" rx="1.6"/>
<rect x="936.90" y="64.00" width="6.10" height="2.00" fill="#f6f5f4" rx="0"/>
<rect x="938.95" y="61.90" width="2.00" height="6.10" fill="#f6f5f4" rx="0"/>
<text transform="translate(666.67 70.09) scale(0.965 1)" font-family="'DejaVu Sans Condensed','DejaVu Sans',sans-serif" font-style="normal" font-weight="normal" font-size="14.47" fill="#2e3436" font-stretch="condensed">Page 1 of 2</text>
<text transform="translate(867.58 70.08) scale(0.992 1)" font-family="'DejaVu Sans Condensed','DejaVu Sans',sans-serif" font-style="normal" font-weight="normal" font-size="15.34" fill="#2e3436" font-stretch="condensed">75.0%</text>
</svg>

</div>
</body>
</html>
